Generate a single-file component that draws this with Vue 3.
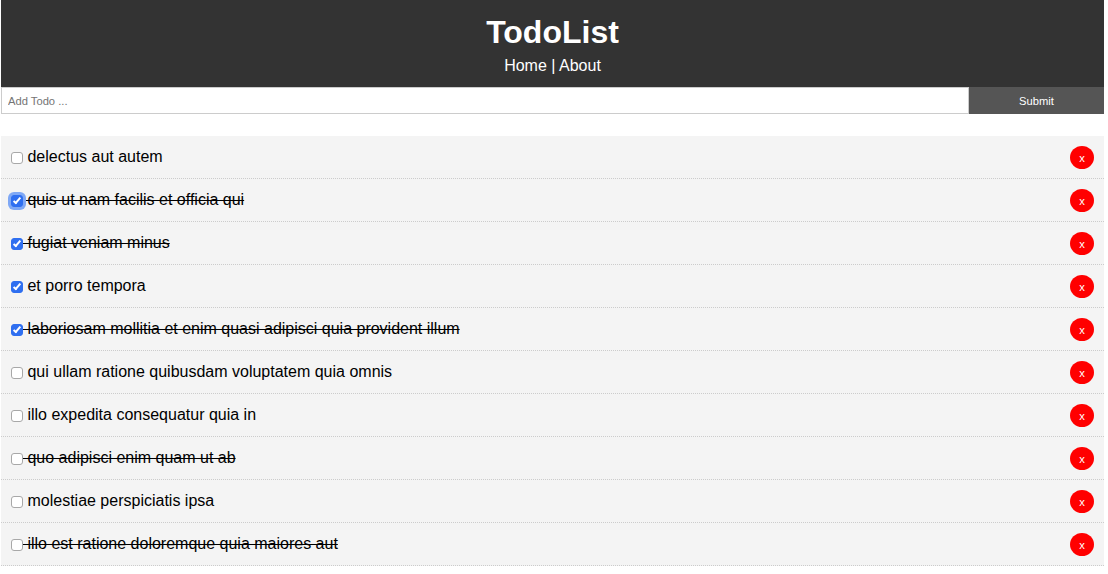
<script setup>
const todos = [
  { title: 'delectus aut autem', checked: false, done: false },
  { title: 'quis ut nam facilis et officia qui', checked: true, done: true, focus: true },
  { title: 'fugiat veniam minus', checked: true, done: true },
  { title: 'et porro tempora', checked: true, done: false },
  { title: 'laboriosam mollitia et enim quasi adipisci quia provident illum', checked: true, done: true },
  { title: 'qui ullam ratione quibusdam voluptatem quia omnis', checked: false, done: false },
  { title: 'illo expedita consequatur quia in', checked: false, done: false },
  { title: 'quo adipisci enim quam ut ab', checked: false, done: true },
  { title: 'molestiae perspiciatis ipsa', checked: false, done: false },
  { title: 'illo est ratione doloremque quia maiores aut', checked: false, done: true }
]
</script>

<template>
  <div class="app">
    <header class="header">
      <h1>TodoList</h1>
      <nav><a href="#">Home</a> | <a href="#">About</a></nav>
    </header>
    <form class="add" @submit.prevent>
      <input class="text" type="text" placeholder="Add Todo ..." />
      <button class="submit" type="submit">Submit</button>
    </form>
    <div class="list">
      <div v-for="t in todos" :key="t.title" class="item" :class="{ done: t.done }">
        <p class="row"><input class="box" :class="{ focus: t.focus }" type="checkbox" :checked="t.checked" /> {{ t.title }}<button class="del">x</button></p>
      </div>
    </div>
  </div>
</template>

<style>
html, body { margin: 0; background: #fff; }
</style>

<style scoped>
.app {
  font-family: "Liberation Sans", Arial, sans-serif;
  font-size: 16px;
  line-height: 1.4;
  color: #000;
  padding: 0 4px 0 1px;
}
.header {
  height: 87px;
  box-sizing: border-box;
  background: #333;
  color: #fff;
  text-align: center;
  padding-top: 10px;
}
.header h1 {
  margin: 0;
  font-size: 32px;
  line-height: 45px;
  font-weight: 700;
}
.header nav { font-size: 16px; line-height: 22px; }
.header a { color: #fff; text-decoration: none; }
.add { display: flex; height: 27px; }
.text {
  flex: 1;
  min-width: 0;
  box-sizing: border-box;
  border: 1px solid #ccc;
  padding: 5px 6px;
  font-family: inherit;
  font-size: 11.2px;
  outline: none;
}
.text::placeholder { color: #757575; }
.submit {
  flex: 0 0 135px;
  border: 0;
  background: #555;
  color: #fff;
  font-family: inherit;
  font-size: 11.2px;
  padding: 0;
}
.list { margin-top: 22px; }
.item {
  background: #f4f4f4;
  padding: 10px;
  height: 43px;
  box-sizing: border-box;
  border-bottom: 1px dotted #ccc;
}
.done .row { text-decoration: line-through; }
.row { margin: 0; line-height: 22px; }
.box {
  appearance: none;
  width: 12px;
  height: 12px;
  margin: 0;
  box-sizing: border-box;
  border: 1px solid #a8a8a8;
  border-radius: 3px;
  background: #fff;
  vertical-align: -2px;
  position: relative;
}
.box:checked { background: #2f6ff0; border-color: #2f6ff0; }
.box:checked::after {
  content: "";
  position: absolute;
  left: 3px;
  top: 0;
  width: 2px;
  height: 6px;
  border: solid #fff;
  border-width: 0 2px 2px 0;
  transform: rotate(40deg);
}
.box.focus { box-shadow: 0 0 0 3px #7fa8f5; }
.del {
  float: right;
  width: 24px;
  height: 23px;
  margin: 0;
  padding: 0;
  border: 0;
  border-radius: 50%;
  background: #f00;
  color: #fff;
  font-family: inherit;
  font-size: 11.2px;
  font-weight: 400;
}
</style>
